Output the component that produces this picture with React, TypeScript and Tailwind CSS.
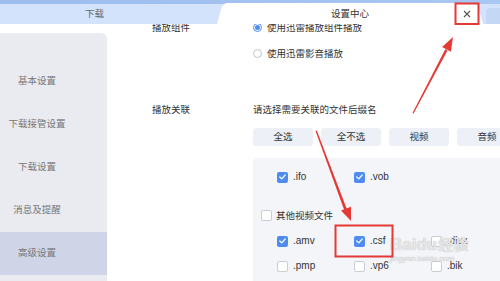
const font = "font-['Liberation_Sans','Noto_Sans_CJK_SC',sans-serif]";

const menu = ["基本设置", "下载接管设置", "下载设置", "消息及提醒", "高级设置"];

function Check({ on }: { on: boolean }) {
  return on ? (
    <span className="flex h-[11px] w-[11px] shrink-0 items-center justify-center rounded-[2px] bg-[#4f8cf0]">
      <svg width="7" height="6" viewBox="0 0 7 6" fill="none">
        <path d="M0.8 3 L2.8 4.9 L6.2 1" stroke="#fff" strokeWidth="1.2" strokeLinecap="round" strokeLinejoin="round" />
      </svg>
    </span>
  ) : (
    <span className="h-[11px] w-[11px] shrink-0 rounded-[2px] border border-[#c9ccd3] bg-white" />
  );
}

function Ext({ name, on }: { name: string; on: boolean }) {
  return (
    <div className="flex h-[14px] w-[77px] shrink-0 items-center gap-[5px]">
      <Check on={on} />
      <span className="text-[10px] text-[#333]">{name}</span>
    </div>
  );
}

function Radio({ on, label }: { on: boolean; label: string }) {
  return (
    <div className="flex h-[14px] items-center gap-[5px]">
      {on ? (
        <span className="flex h-[9px] w-[9px] items-center justify-center rounded-full border border-[#4f8cf0] bg-white">
          <span className="h-[5px] w-[5px] rounded-full bg-[#4f8cf0]" />
        </span>
      ) : (
        <span className="h-[9px] w-[9px] rounded-full border border-[#bfc3ca] bg-white" />
      )}
      <span>{label}</span>
    </div>
  );
}

export default function App() {
  return (
    <div className={`relative flex h-[281px] w-[500px] flex-col overflow-hidden bg-white text-[9.5px] leading-[14px] text-[#444] ${font}`}>
      {/* tab strip */}
      <div className="h-[4px] shrink-0 bg-gradient-to-r from-[#9dbcef] to-[#a9c7f3]" />
      <div className="relative flex h-[20px] shrink-0 bg-[#d2e3fb]">
        <div className="flex w-[217px] items-center pl-[85px] text-[#666]">下载</div>
        <div className="relative -mt-[1px] flex h-[21px] w-[266px] items-center justify-center bg-white [clip-path:polygon(0_100%,5px_3px,9px_0,257px_0,261px_3px,100%_100%)]">
          <span className="text-[#333]">设置中心</span>
          <span className="absolute left-[246px] top-[7px]">
            <svg width="8" height="8" viewBox="0 0 8 8">
              <path d="M1 1 L7 7 M7 1 L1 7" stroke="#555" strokeWidth="1.1" />
            </svg>
          </span>
        </div>
        <div className="ml-[3px] mt-[4px] flex-1 rounded-tl-[4px] bg-[#c4d8f6]" />
      </div>

      <div className="flex min-h-0 flex-1">
        {/* sidebar */}
        <div className="mt-[9px] flex w-[107px] shrink-0 flex-col rounded-tr-[6px] bg-[#eaebf0] pt-[26.5px]">
          {menu.map((m, i) => (
            <div
              key={m}
              className={`flex h-[43px] shrink-0 items-center justify-center pr-[33px] text-[#777] ${i === 4 ? "bg-[#cfd5e7]" : ""}`}
            >
              {m}
            </div>
          ))}
        </div>

        {/* content */}
        <div className="relative min-w-0 flex-1 overflow-hidden">
          <div className="-mt-[3.5px] flex flex-col pl-[45px] text-[#333]">
            <div className="flex">
              <div className="w-[101px] shrink-0">播放组件</div>
              <div className="flex flex-col gap-[12px]">
                <Radio on label="使用迅雷播放组件播放" />
                <Radio on={false} label="使用迅雷影音播放" />
              </div>
            </div>

            <div className="mt-[42.5px] flex">
              <div className="w-[101px] shrink-0">播放关联</div>
              <div className="flex min-w-0 flex-1 flex-col">
                <div>请选择需要关联的文件后缀名</div>
                <div className="mt-[11px] flex gap-[8px]">
                  {["全选", "全不选", "视频", "音频"].map((b) => (
                    <div key={b} className="flex h-[18px] w-[60px] shrink-0 items-center justify-center rounded-[3px] bg-[#edf0f6]">
                      {b}
                    </div>
                  ))}
                </div>
                <div className="mt-[12px] h-[140px] rounded-tl-[3px] bg-[#f3f5f9] pl-[24px] pt-[12px]">
                  <div className="flex">
                    <Ext name=".ifo" on />
                    <Ext name=".vob" on />
                  </div>
                  <div className="-ml-[16px] mt-[24.5px] flex h-[14px] items-center gap-[4px]">
                    <Check on={false} />
                    <span>其他视频文件</span>
                  </div>
                  <div className="mt-[11.5px] flex">
                    <Ext name=".amv" on />
                    <Ext name=".csf" on />
                    <Ext name=".divx" on={false} />
                  </div>
                  <div className="mt-[11px] flex">
                    <Ext name=".pmp" on={false} />
                    <Ext name=".vp6" on={false} />
                    <Ext name=".bik" on={false} />
                  </div>
                </div>
              </div>
            </div>
          </div>
        </div>
      </div>

      {/* watermark */}
      <div className="pointer-events-none absolute left-[390px] top-[236px] flex flex-col items-start text-[#eeeeee]/90 [text-shadow:0_0_1px_#a8a8a8]">
        <div className="flex items-end text-[17px] font-bold leading-[18px]">
          <span>Bai</span>
          <span>du</span>
          <span className="ml-[1px] text-[15px]">经验</span>
        </div>
        <div className="text-[8px] leading-[10px]">jingyan.baidu.com</div>
      </div>

      {/* annotations */}
      <svg className="pointer-events-none absolute left-0 top-0" width="500" height="281" viewBox="0 0 500 281">
        <rect x="455.5" y="3.5" width="23" height="20.5" fill="none" stroke="#e53935" strokeWidth="2" />
        <rect x="335.5" y="225.5" width="57" height="31" fill="none" stroke="#e53935" strokeWidth="2" />
        <polygon points="315.5,131 316.8,130.6 347,209.5 344.4,210.5" fill="#e53935" />
        <polygon points="351,221 341,210.5 351,206.8" fill="#e53935" />
        <polygon points="412.5,113 413.6,113.6 447.5,50.5 445.3,49.3" fill="#e53935" />
        <polygon points="453,37 450.9,51.8 442.1,47.1" fill="#e53935" />
      </svg>
    </div>
  );
}
